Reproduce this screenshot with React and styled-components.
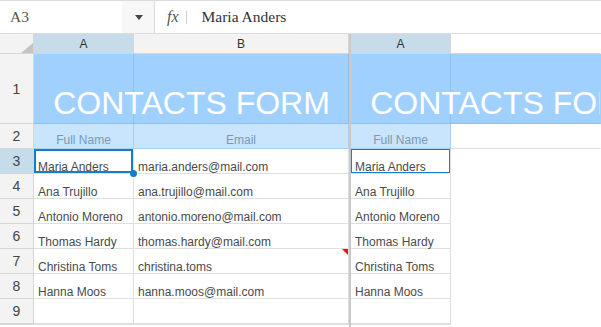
import React from "react";
import styled, { createGlobalStyle, css } from "styled-components";

const contacts = [
  { name: "Maria Anders", email: "maria.anders@mail.com" },
  { name: "Ana Trujillo", email: "ana.trujillo@mail.com" },
  { name: "Antonio Moreno", email: "antonio.moreno@mail.com" },
  { name: "Thomas Hardy", email: "thomas.hardy@mail.com" },
  { name: "Christina Toms", email: "christina.toms", comment: true },
  { name: "Hanna Moos", email: "hanna.moos@mail.com" },
  { name: "", email: "" },
  { name: "", email: "" },
];

const GlobalStyle = createGlobalStyle`
  body {
    margin: 0;
    background: #fff;
    font-family: "Liberation Sans", Arial, sans-serif;
  }
`;

const Page = styled.div`
  width: 601px;
  height: 327px;
  overflow: hidden;
  background: #fff;
`;

const FormulaBar = styled.div`
  display: flex;
  align-items: stretch;
  height: 34px;
  box-sizing: border-box;
  border-top: 1px solid #dcdcdc;
  border-bottom: 1px solid #dcdcdc;
  font-family: "Liberation Serif", "Times New Roman", serif;
`;

const NameBox = styled.div`
  width: 122px;
  display: flex;
  align-items: center;
  padding-left: 10px;
  box-sizing: border-box;
  font-size: 15.5px;
  color: #555;
`;

const DropButton = styled.div`
  width: 32px;
  background: #f7f7f7;
  border-right: 1px solid #dcdcdc;
  display: flex;
  align-items: center;
  justify-content: center;
  &::after {
    content: "";
    border-left: 4px solid transparent;
    border-right: 4px solid transparent;
    border-top: 5px solid #444;
    margin-left: 2px;
  }
`;

const FxLabel = styled.div`
  display: flex;
  align-items: center;
  padding: 0 23px 0 12px;
  font-style: italic;
  font-size: 16px;
  color: #555;
  position: relative;
  &::after {
    content: "";
    position: absolute;
    right: 15px;
    top: 10px;
    bottom: 9px;
    width: 1px;
    background: #cfcfcf;
  }
`;

const FormulaText = styled.div`
  display: flex;
  align-items: center;
  font-size: 15.5px;
  color: #333;
`;

const Sheet = styled.div`
  display: flex;
  align-items: flex-start;
`;

const Pane = styled.div`
  display: grid;
  grid-template-columns: ${(p) => p.$cols};
  grid-template-rows: 20px 70px repeat(8, 25px);
  flex: ${(p) => (p.$grow ? 1 : "none")};
  width: ${(p) => p.$width || "auto"};
`;

const Split = styled.div`
  width: 2px;
  height: 300px;
  background: #c9c9c9;
`;

const cellBase = css`
  box-sizing: border-box;
  border-right: 1px solid #dfdfdf;
  border-bottom: 1px solid #dfdfdf;
  min-width: 0;
`;

const Corner = styled.div`
  ${cellBase};
  background: #f3f3f3;
  border-color: #d6d6d6;
  position: relative;
  &::after {
    content: "";
    position: absolute;
    right: 0;
    bottom: 0;
    border-left: 12px solid transparent;
    border-bottom: 10px solid #c4c4c4;
  }
`;

const ColHead = styled.div`
  ${cellBase};
  border-color: #d6d6d6;
  background: ${(p) => (p.$active ? "#c6dcea" : p.$plain ? "#fff" : "#f3f3f3")};
  border-right-color: ${(p) => (p.$plain ? "transparent" : "#d6d6d6")};
  display: flex;
  align-items: center;
  justify-content: center;
  font-size: 12px;
  color: #333;
`;

const RowNum = styled.div`
  ${cellBase};
  border-color: #d6d6d6;
  background: ${(p) => (p.$active ? "#c6dcea" : "#f3f3f3")};
  display: flex;
  align-items: center;
  justify-content: center;
  font-size: 14px;
  color: #444;
`;

const TitleCell = styled.div`
  ${cellBase};
  grid-column: span 2;
  border-color: #8ec0ec;
  border-right-color: ${(p) => (p.$open ? "transparent" : "#8ec0ec")};
  background: linear-gradient(
      to right,
      transparent 99px,
      #8ec0ec 99px,
      #8ec0ec 100px,
      transparent 100px
    ),
    #a0d1fe;
  display: flex;
  align-items: flex-end;
  padding-bottom: 4px;
  overflow: hidden;
`;

const TitleText = styled.div`
  flex: none;
  width: 315px;
  text-align: center;
  white-space: nowrap;
  font-size: 32px;
  line-height: 32px;
  color: #fff;
`;

const LabelCell = styled.div`
  ${cellBase};
  background: ${(p) => (p.$blank ? "#fff" : "#c9e4fd")};
  border-color: ${(p) => (p.$blank ? "#dfdfdf" : "#a9d0f2")};
  border-right-color: ${(p) => (p.$blank ? "transparent" : "#a9d0f2")};
  display: flex;
  align-items: flex-end;
  justify-content: center;
  padding-bottom: 1px;
  font-size: 12px;
  line-height: 14px;
  color: #7c98b3;
`;

const DataCell = styled.div`
  ${cellBase};
  position: relative;
  display: flex;
  align-items: flex-end;
  padding: 0 0 0 4px;
  font-size: 12px;
  line-height: 12px;
  color: #4a4a4a;
  white-space: nowrap;
  ${(p) =>
    p.$selected &&
    css`
      box-shadow: inset 0 0 0 ${p.$thin ? "1px" : "2px"} #1a7cc9;
    `}
  ${(p) =>
    p.$blank &&
    css`
      border-color: transparent;
    `}
`;

const FillHandle = styled.span`
  position: absolute;
  right: -4px;
  bottom: -4px;
  width: 7px;
  height: 7px;
  border-radius: 50%;
  background: #1a7cc9;
  z-index: 2;
`;

const CommentMark = styled.span`
  position: absolute;
  top: 0;
  right: 0;
  border-left: 6px solid transparent;
  border-top: 6px solid #f01010;
`;

export default function App() {
  return (
    <Page>
      <GlobalStyle />
      <FormulaBar>
        <NameBox>A3</NameBox>
        <DropButton />
        <FxLabel>fx</FxLabel>
        <FormulaText>Maria Anders</FormulaText>
      </FormulaBar>
      <Sheet>
        <Pane $cols="34px 100px 215px" $width="349px">
          <Corner />
          <ColHead $active>A</ColHead>
          <ColHead>B</ColHead>

          <RowNum>1</RowNum>
          <TitleCell>
            <TitleText>CONTACTS FORM</TitleText>
          </TitleCell>

          <RowNum>2</RowNum>
          <LabelCell>Full Name</LabelCell>
          <LabelCell>Email</LabelCell>

          {contacts.map((c, i) => (
            <React.Fragment key={i}>
              <RowNum $active={i === 0}>{i < 7 ? i + 3 : ""}</RowNum>
              <DataCell $selected={i === 0}>
                {c.name}
                {i === 0 && <FillHandle />}
              </DataCell>
              <DataCell>
                {c.email}
                {c.comment && <CommentMark />}
              </DataCell>
            </React.Fragment>
          ))}
        </Pane>
        <Split />
        <Pane $cols="100px 1fr" $grow>
          <ColHead $active>A</ColHead>
          <ColHead $plain />

          <TitleCell $open>
            <TitleText>CONTACTS FORM</TitleText>
          </TitleCell>

          <LabelCell>Full Name</LabelCell>
          <LabelCell $blank />

          {contacts.map((c, i) => (
            <React.Fragment key={i}>
              <DataCell $selected={i === 0} $thin>
                {c.name}
              </DataCell>
              <DataCell $blank />
            </React.Fragment>
          ))}
        </Pane>
      </Sheet>
    </Page>
  );
}
